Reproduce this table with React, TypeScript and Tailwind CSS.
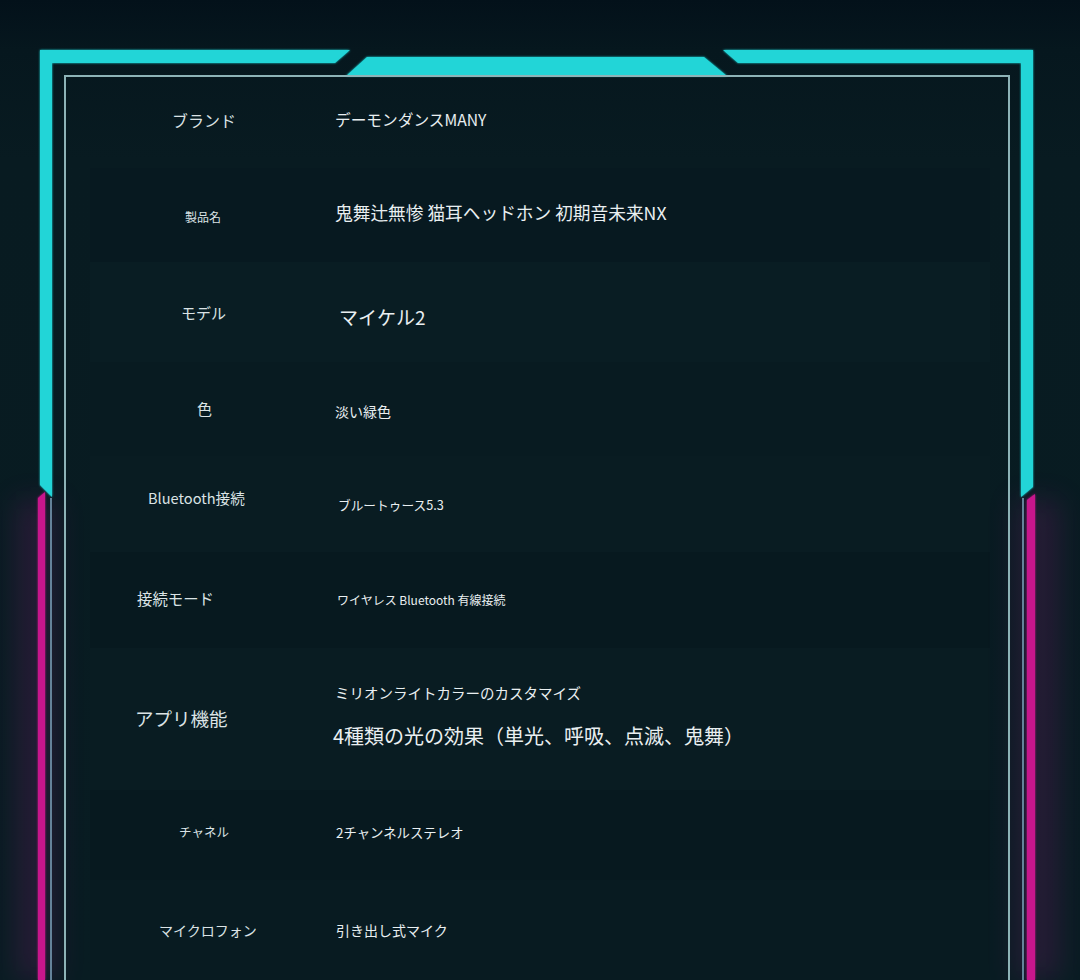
import React from "react";

type Row = {
  label: string;
  h: string;
  labelCls: string;
  valueCls: string;
  values: { text: string; cls: string }[];
  band: string;
};

const rows: Row[] = [
  {
    label: "ブランド",
    h: "h-[96px]",
    labelCls: "pl-[172px] text-[16px] leading-[24px] mt-[36px]",
    valueCls: "pl-[0px]",
    values: [{ text: "デーモンダンスMANY", cls: "text-[15.7px] leading-[22px] mt-[37px]" }],
    band: "bg-transparent",
  },
  {
    label: "製品名",
    h: "h-[94px]",
    labelCls: "pl-[185px] text-[12px] leading-[18px] mt-[40px]",
    valueCls: "pl-[0px]",
    values: [{ text: "鬼舞辻無惨 猫耳ヘッドホン 初期音未来NX", cls: "text-[17.7px] leading-[24px] mt-[32px]" }],
    band: "bg-[#071920]",
  },
  {
    label: "モデル",
    h: "h-[100px]",
    labelCls: "pl-[181px] text-[15px] leading-[22px] mt-[40px]",
    valueCls: "pl-[4px]",
    values: [{ text: "マイケル2", cls: "text-[19px] leading-[26px] mt-[42px]" }],
    band: "bg-[#091d23]",
  },
  {
    label: "色",
    h: "h-[94px]",
    labelCls: "pl-[197px] text-[15px] leading-[22px] mt-[36px]",
    valueCls: "pl-[0px]",
    values: [{ text: "淡い緑色", cls: "text-[14px] leading-[20px] mt-[39px]" }],
    band: "bg-[#081b21]",
  },
  {
    label: "Bluetooth接続",
    h: "h-[96px]",
    labelCls: "pl-[148px] text-[14.6px] leading-[20px] mt-[32px]",
    valueCls: "pl-[3px]",
    values: [{ text: "ブルートゥース5.3", cls: "text-[12.7px] leading-[18px] mt-[40px]" }],
    band: "bg-[#091c22]",
  },
  {
    label: "接続モード",
    h: "h-[96px]",
    labelCls: "pl-[137px] text-[15.4px] leading-[22px] mt-[35px]",
    valueCls: "pl-[2px]",
    values: [{ text: "ワイヤレス Bluetooth 有線接続", cls: "text-[12px] leading-[18px] mt-[39px]" }],
    band: "bg-[#07191f]",
  },
  {
    label: "アプリ機能",
    h: "h-[142px]",
    labelCls: "pl-[135px] text-[18.5px] leading-[26px] mt-[57px]",
    valueCls: "pl-[0px]",
    values: [
      { text: "ミリオンライトカラーのカスタマイズ", cls: "text-[14.5px] leading-[20px] mt-[35px]" },
      { text: "4種類の光の効果（単光、呼吸、点滅、鬼舞）", cls: "text-[20px] leading-[26px] mt-[20px] -ml-[2px]" },
    ],
    band: "bg-[#091c22]",
  },
  {
    label: "チャネル",
    h: "h-[90px]",
    labelCls: "pl-[179px] text-[12.5px] leading-[18px] mt-[33px]",
    valueCls: "pl-[1px]",
    values: [{ text: "2チャンネルステレオ", cls: "text-[13.4px] leading-[20px] mt-[32px]" }],
    band: "bg-[#07191f]",
  },
  {
    label: "マイクロフォン",
    h: "h-[100px]",
    labelCls: "pl-[159px] text-[14px] leading-[20px] mt-[40px]",
    valueCls: "pl-[1px]",
    values: [{ text: "引き出し式マイク", cls: "text-[14px] leading-[20px] mt-[40px]" }],
    band: "bg-[#081b21]",
  },
];

// decorative neon frame drawn over the page
const Frame = () => (
  <svg className="absolute inset-0 pointer-events-none" width="1080" height="980" viewBox="0 0 1080 980">
    <defs>
      <filter id="glow" x="-50%" y="-50%" width="200%" height="200%">
        <feGaussianBlur stdDeviation="1" result="b" />
        <feMerge>
          <feMergeNode in="b" />
          <feMergeNode in="SourceGraphic" />
        </feMerge>
      </filter>
      <filter id="haze" x="-200%" y="-10%" width="500%" height="120%">
        <feGaussianBlur stdDeviation="14" />
      </filter>
    </defs>

    {/* magenta haze */}
    <rect x="16" y="500" width="40" height="480" fill="#6a1a62" opacity="0.3" filter="url(#haze)" />
    <rect x="1016" y="500" width="44" height="480" fill="#6a1a62" opacity="0.3" filter="url(#haze)" />

    {/* cyan corners */}
    <g fill="#20d5d7" filter="url(#glow)">
      <polygon points="40,50 350,50 335,63 52,63 52,497 40,485" />
      <polygon points="723,50 1033,50 1033,487 1021,497 1021,63 738,63" />
      <polygon points="367,57 704,57 727,76 346,76" />
    </g>

    {/* magenta side bars */}
    <g fill="#c8168c" filter="url(#glow)">
      <polygon points="38,498 45,492 45,980 38,980" />
      <polygon points="1027,500 1035,494 1035,980 1027,980" />
    </g>

    {/* thin lines */}
    <line x1="51" y1="498" x2="51" y2="980" stroke="#7fa6bf" strokeWidth="1.5" />
    <line x1="1023" y1="498" x2="1023" y2="980" stroke="#7fa6bf" strokeWidth="1.5" />
    <polyline points="65,980 65,76 1009,76 1009,980" fill="none" stroke="#8db3b7" strokeWidth="2" />
  </svg>
);

export default function App() {
  return (
    <div className="relative w-[1080px] h-[980px] overflow-hidden bg-[linear-gradient(180deg,#03111a_0px,#06171e_50px,#081b21_160px,#081c22_100%)] font-['Noto_Sans_CJK_JP','Noto_Sans',sans-serif]">
      <div className="flex flex-col pt-[72px] px-[90px]">
        {rows.map((r, i) => (
          <div key={i} className={`flex items-start ${r.h} ${r.band}`}>
            <div className={`w-[335px] shrink-0 -ml-[90px] text-[#dbe3e5] whitespace-nowrap ${r.labelCls}`}>
              {r.label}
            </div>
            <div className={`flex flex-col text-[#e9eff1] whitespace-nowrap ${r.valueCls}`}>
              {r.values.map((v, j) => (
                <div key={j} className={v.cls}>
                  {v.text}
                </div>
              ))}
            </div>
          </div>
        ))}
      </div>
      <Frame />
    </div>
  );
}
